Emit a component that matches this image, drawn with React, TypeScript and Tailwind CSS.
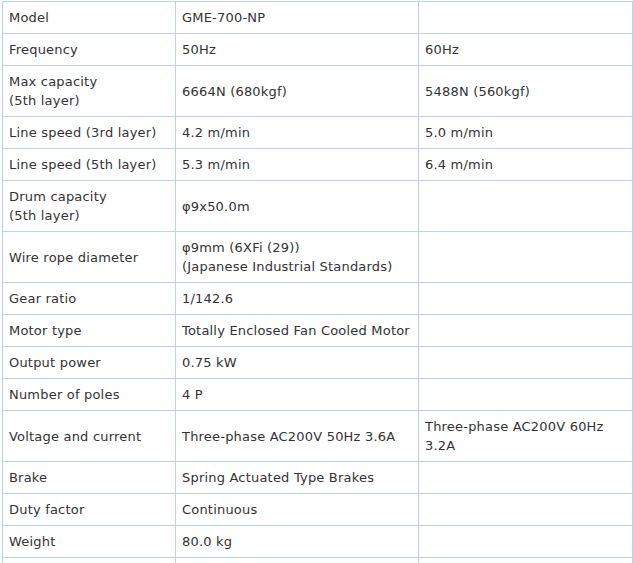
import React from "react";

const rows: [string[], string, string][] = [
  [["Model"], "GME-700-NP", ""],
  [["Frequency"], "50Hz", "60Hz"],
  [["Max capacity", "(5th layer)"], "6664N (680kgf)", "5488N (560kgf)"],
  [["Line speed (3rd layer)"], "4.2 m/min", "5.0 m/min"],
  [["Line speed (5th layer)"], "5.3 m/min", "6.4 m/min"],
  [["Drum capacity", "(5th layer)"], "φ9x50.0m", ""],
  [["Wire rope diameter"], "φ9mm (6XFi (29))\n(Japanese Industrial Standards)", ""],
  [["Gear ratio"], "1/142.6", ""],
  [["Motor type"], "Totally Enclosed Fan Cooled Motor", ""],
  [["Output power"], "0.75 kW", ""],
  [["Number of poles"], "4 P", ""],
  [["Voltage and current"], "Three-phase AC200V 50Hz 3.6A", "Three-phase AC200V 60Hz\n3.2A"],
  [["Brake"], "Spring Actuated Type Brakes", ""],
  [["Duty factor"], "Continuous", ""],
  [["Weight"], "80.0 kg", ""],
  [["\u00a0"], "", ""],
];

const cell =
  "border border-[#bfd0f5] px-[6px] py-[6px] align-middle leading-[19px] whitespace-pre-line";

export default function App() {
  return (
    <div
      className="bg-white w-[633px] h-[563px] overflow-hidden pl-[2px] pt-[1px] text-[#333333] text-[13px] tracking-[0.2px]"
      style={{ fontFamily: '"DejaVu Sans", Verdana, sans-serif' }}
    >
      <table className="border-collapse table-fixed w-[630px]">
        <colgroup>
          <col className="w-[173px]" />
          <col className="w-[243px]" />
          <col className="w-[214px]" />
        </colgroup>
        <tbody>
          {rows.map(([a, b, c], i) => (
            <tr key={i}>
              <td className={cell}>
                {a.map((l, j) => (
                  <div key={j}>{l}</div>
                ))}
              </td>
              <td className={cell}>{b}</td>
              <td className={cell}>{c}</td>
            </tr>
          ))}
        </tbody>
      </table>
    </div>
  );
}
